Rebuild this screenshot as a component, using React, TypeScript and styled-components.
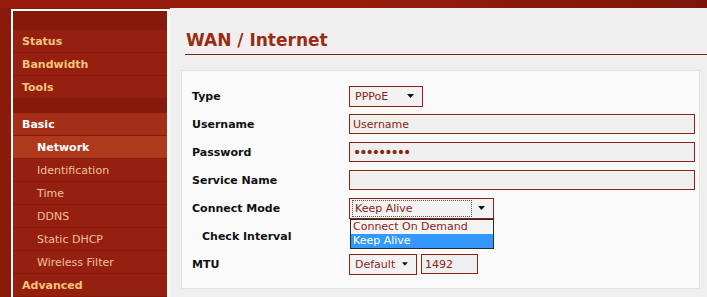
import styled, { createGlobalStyle } from "styled-components";

const GlobalStyle = createGlobalStyle`
  html, body {
    margin: 0;
    padding: 0;
    background-color: #8a1a0a;
    font-family: "DejaVu Sans", Verdana, sans-serif;
  }
`;

const Page = styled.div`
  width: 707px;
  height: 297px;
  overflow: hidden;
  display: flex;
  flex-direction: column;
`;
const TopBar = styled.div`
  height: 8px;
  flex-shrink: 0;
  background: linear-gradient(90deg, #981d0c 0%, #951c0c 55%, #7c1508 100%);
`;
const Main = styled.div`
  flex: 1;
  display: flex;
  min-height: 0;
`;

/* ---------- sidebar ---------- */
const Sidebar = styled.nav`
  width: 154px;
  margin: 1px 0 0 11px;
  border-left: 2px solid #ffffff;
  border-top: 2px solid #ffffff;
  border-right: 3px solid #fbfbfb;
  background-color: #941f0e;
  display: flex;
  flex-direction: column;
`;
const Spacer = styled.div<{ $h: number }>`
  height: ${(p) => p.$h}px;
  flex-shrink: 0;
  background-color: #851a09;
`;

type ItemKind = "group" | "groupActive" | "sub" | "subActive";

const itemBg: Record<ItemKind, string> = {
  group: "#952010",
  groupActive: "#a42e17",
  sub: "#952010",
  subActive: "#ae391d",
};
const itemColor: Record<ItemKind, string> = {
  group: "#f5c47c",
  groupActive: "#ffffff",
  sub: "#f1c19c",
  subActive: "#ffffff",
};

const Item = styled.div<{ $kind: ItemKind }>`
  box-sizing: border-box;
  height: 23px;
  flex-shrink: 0;
  display: flex;
  align-items: center;
  padding-left: ${(p) => (p.$kind === "sub" || p.$kind === "subActive" ? 24 : 9)}px;
  background-color: ${(p) => itemBg[p.$kind]};
  border-bottom: 1px solid #88190a;
  color: ${(p) => itemColor[p.$kind]};
  font-size: 11px;
  font-weight: ${(p) => (p.$kind === "sub" ? "normal" : "bold")};
  white-space: nowrap;
`;

/* ---------- content ---------- */
const Content = styled.main`
  flex: 1;
  background-color: #efefef;
  display: flex;
  flex-direction: column;
`;
const Title = styled.h1`
  margin: 21px 0 0 15px;
  padding: 0 0 3px 1px;
  line-height: 22px;
  font-size: 17px;
  font-weight: bold;
  color: #9a2b14;
  border-bottom: 1px solid #7a2110;
`;
const Panel = styled.section`
  margin: 15px 7px 0 11px;
  padding: 11px 4px 10px 10px;
  border: 1px solid #e2e2e2;
  background-color: #fafafa;
`;
const Row = styled.div`
  height: 28px;
  display: grid;
  grid-template-columns: 157px 1fr;
  align-items: center;
`;
const Label = styled.div<{ $indent?: boolean }>`
  padding-left: ${(p) => (p.$indent ? 10 : 0)}px;
  font-size: 11px;
  font-weight: bold;
  color: #111111;
`;
const Field = styled.div`
  display: flex;
  align-items: center;
  gap: 4px;
`;
const TextInput = styled.input<{ $w?: number }>`
  box-sizing: border-box;
  width: ${(p) => (p.$w ? `${p.$w}px` : "100%")};
  height: 20px;
  margin: 0;
  padding: 0 3px;
  border: 1px solid #8b2312;
  background-color: #efefef;
  color: #8b2312;
  font-family: "DejaVu Sans", Verdana, sans-serif;
  font-size: 11px;
  outline: none;

  &[type="password"] {
    font-size: 14px;
    letter-spacing: -2px;
  }
`;
const SelectWrap = styled.div`
  position: relative;
`;
const SelectBox = styled.div<{ $w: number }>`
  box-sizing: border-box;
  width: ${(p) => p.$w}px;
  height: 21px;
  border: 1px solid #8b2312;
  background-color: #f2f2f2;
  display: flex;
  align-items: center;
  padding: 0 8px 0 2px;
  gap: 6px;
`;
const SelectText = styled.span<{ $focus?: boolean }>`
  flex: 1;
  height: 17px;
  box-sizing: border-box;
  display: flex;
  align-items: center;
  padding-left: 2px;
  border: 1px dotted ${(p) => (p.$focus ? "#555555" : "transparent")};
  color: #8b2312;
  font-size: 11px;
  white-space: nowrap;
`;
const Menu = styled.ul`
  position: absolute;
  top: 21px;
  left: 1px;
  right: 0;
  margin: 0;
  padding: 0;
  list-style: none;
  border: 1px solid #2a2a2a;
  background-color: #f4f4f4;
  z-index: 2;
`;
const MenuItem = styled.li<{ $selected?: boolean }>`
  height: 14px;
  line-height: 14px;
  padding-left: 2px;
  font-size: 11px;
  white-space: nowrap;
  color: ${(p) => (p.$selected ? "#ffffff" : "#8b2312")};
  background-color: ${(p) => (p.$selected ? "#3399ff" : "transparent")};
`;

const Arrow = () => (
  <svg width="7" height="4" viewBox="0 0 7 4">
    <path d="M0 0 H7 L3.5 4 Z" fill="#111" />
  </svg>
);

interface ISelect {
  width: number;
  value: string;
  focus?: boolean;
  options?: string[];
}
const Select = ({ width, value, focus, options }: ISelect) => (
  <SelectWrap>
    <SelectBox $w={width}>
      <SelectText $focus={focus}>{value}</SelectText>
      <Arrow />
    </SelectBox>
    {options && (
      <Menu>
        {options.map((o) => (
          <MenuItem key={o} $selected={o === value}>
            {o}
          </MenuItem>
        ))}
      </Menu>
    )}
  </SelectWrap>
);

const menu: { label: string; kind: ItemKind }[] = [
  { label: "Basic", kind: "groupActive" },
  { label: "Network", kind: "subActive" },
  { label: "Identification", kind: "sub" },
  { label: "Time", kind: "sub" },
  { label: "DDNS", kind: "sub" },
  { label: "Static DHCP", kind: "sub" },
  { label: "Wireless Filter", kind: "sub" },
  { label: "Advanced", kind: "group" },
];

export default function App() {
  return (
    <>
      <GlobalStyle />
      <Page>
        <TopBar />
        <Main>
          <Sidebar>
            <Spacer $h={19} />
            <Item $kind="group">Status</Item>
            <Item $kind="group">Bandwidth</Item>
            <Item $kind="group">Tools</Item>
            <Spacer $h={14} />
            {menu.map((m) => (
              <Item key={m.label} $kind={m.kind}>
                {m.label}
              </Item>
            ))}
          </Sidebar>
          <Content>
            <Title>WAN / Internet</Title>
            <Panel>
              <Row>
                <Label>Type</Label>
                <Field>
                  <Select width={74} value="PPPoE" />
                </Field>
              </Row>
              <Row>
                <Label>Username</Label>
                <TextInput readOnly value="Username" />
              </Row>
              <Row>
                <Label>Password</Label>
                <TextInput readOnly type="password" value="123456789" />
              </Row>
              <Row>
                <Label>Service Name</Label>
                <TextInput readOnly value="" />
              </Row>
              <Row>
                <Label>Connect Mode</Label>
                <Field>
                  <Select
                    width={145}
                    value="Keep Alive"
                    focus
                    options={["Connect On Demand", "Keep Alive"]}
                  />
                </Field>
              </Row>
              <Row>
                <Label $indent>Check Interval</Label>
                <Field />
              </Row>
              <Row>
                <Label>MTU</Label>
                <Field>
                  <Select width={68} value="Default" />
                  <TextInput readOnly $w={57} value="1492" />
                </Field>
              </Row>
            </Panel>
          </Content>
        </Main>
      </Page>
    </>
  );
}
